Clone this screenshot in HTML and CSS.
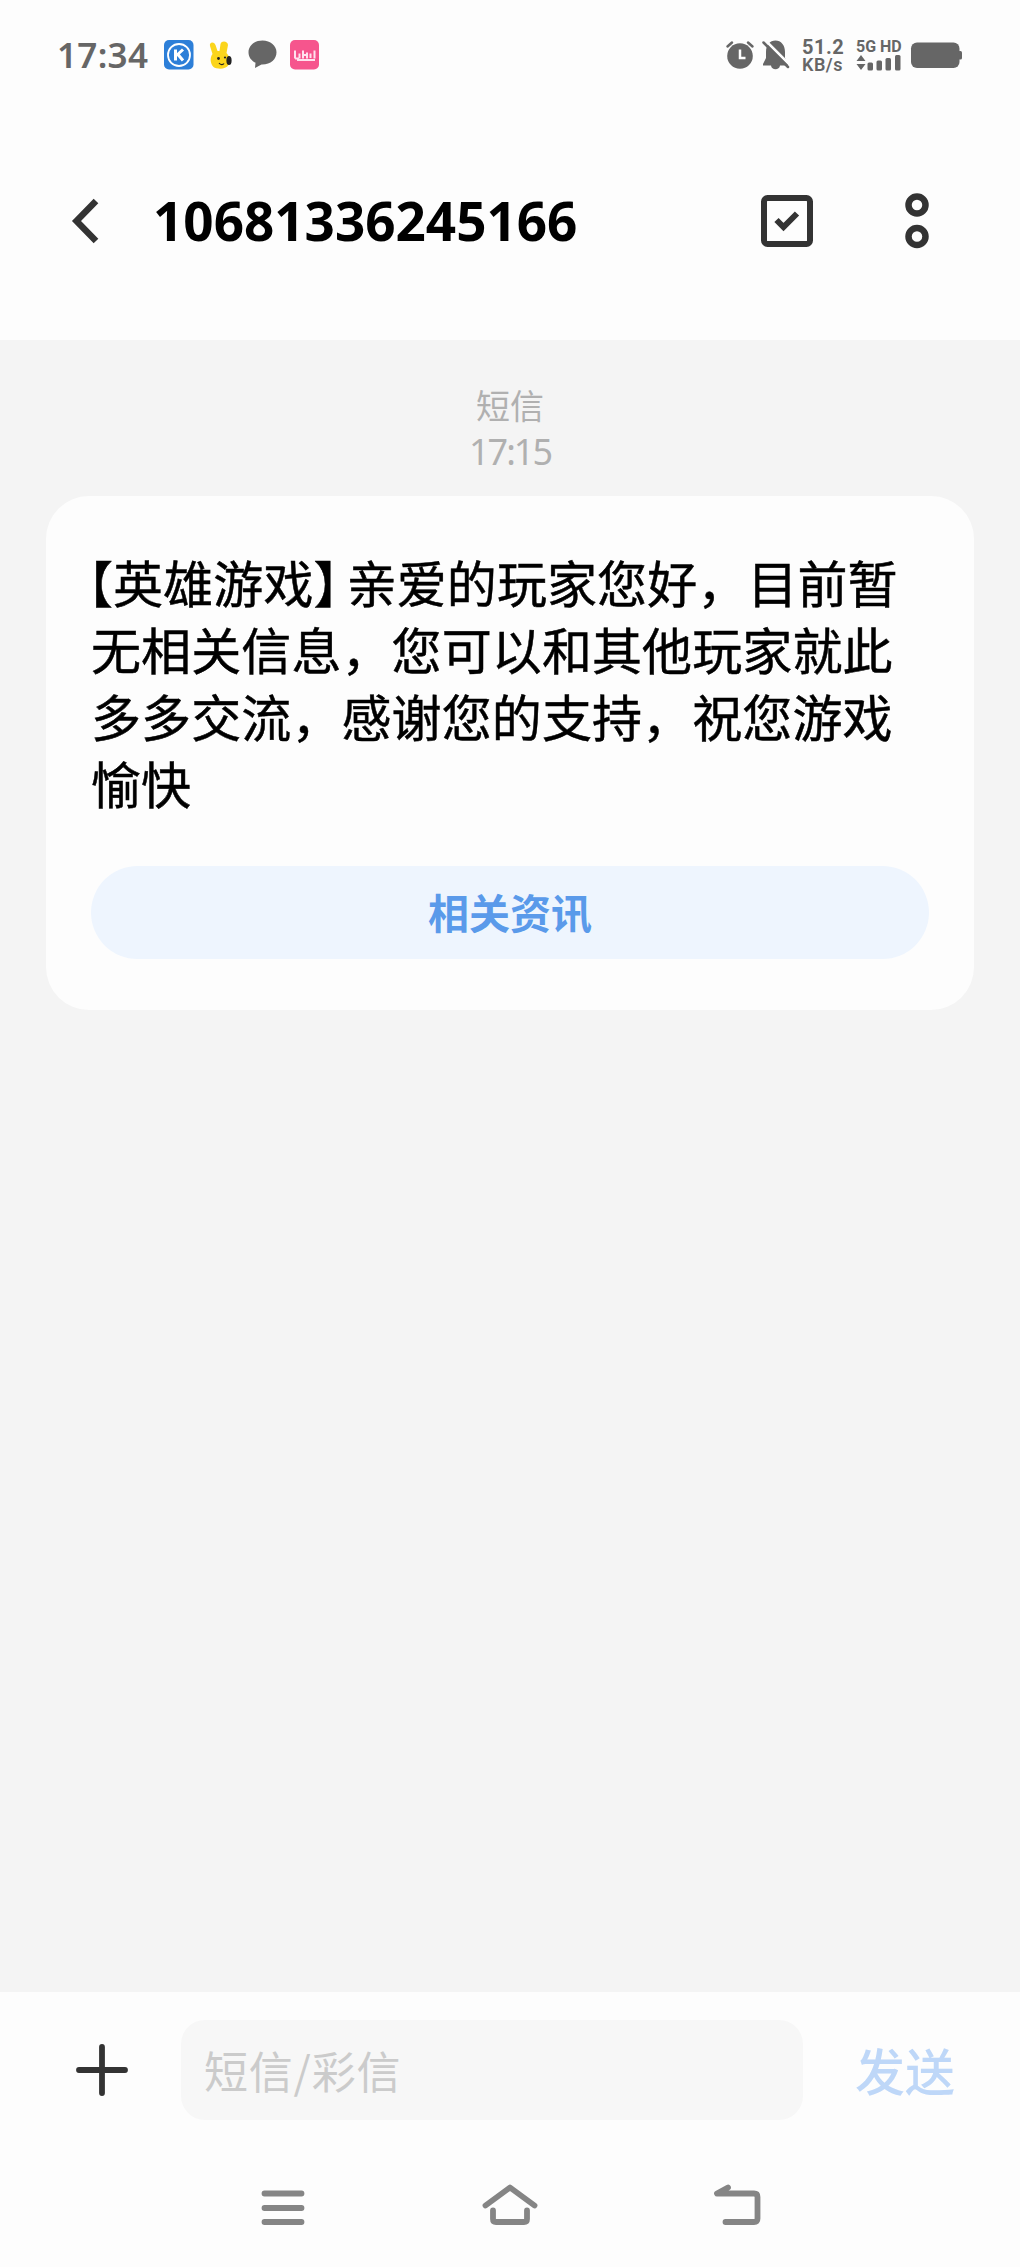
FILE: index.html
```
<!DOCTYPE html>
<html lang="zh-CN">
<head>
    <meta charset="UTF-8">
    <meta name="viewport" content="width=device-width, initial-scale=1.0">
    <title>短信</title>
    <link rel="stylesheet" href="styles.css">
</head>
<body>
    <div class="phone">
        <div class="status-bar">
            <div class="status-left">
                <span class="clock">17:34</span>
                <svg class="app-icon" width="30" height="30" viewBox="0 0 30 30">
                    <rect width="29.5" height="29.5" rx="5" fill="#2d7fd8"/>
                    <circle cx="15" cy="15" r="11" fill="none" stroke="#fff" stroke-width="1.8"/>
                    <path d="M11.5 9.5v11M19 9.5l-6.5 6M14 14.5l5 6" fill="none" stroke="#fff" stroke-width="3"/>
                </svg>
                <svg class="app-icon" width="24" height="30" viewBox="0 0 24 30">
                    <path d="M1 6C0 2 5 1 6.5 5l2 6h2l1-7c1-4 7.5-3 7.500 1l-1.500 8c3 3 4 8 2 12-3 5-12 4-15 2-3-3-4-9-1-13z" fill="#fbd51c"/>
                    <ellipse cx="20" cy="20.5" rx="2.6" ry="4.5" fill="#222"/>
                    <circle cx="9.5" cy="18.5" r="1.4" fill="#222"/>
                    <circle cx="16" cy="17.5" r="1.1" fill="#222"/>
                    <path d="M10 23c1.500 2 4 2 5 .5" fill="none" stroke="#222" stroke-width="1.2"/>
                </svg>
                <svg class="app-icon" width="30" height="30" viewBox="0 0 30 30">
                    <path d="M14.500 .5C6.500 .5 .5 5.700.5 12.200c0 5 3 8.500 7 10.500L7 28l6.500-3.500c9 .3 15-5.300 15-12.300C28.500 5.700 22.500 .5 14.500 .5z" fill="#666"/>
                </svg>
                <svg class="app-icon app-icon-last" width="30" height="30" viewBox="0 0 30 30">
                    <rect width="29" height="29.5" rx="5" fill="#f6558d"/>
                    <path d="M5 10.500v8M5 18.500h4M9.500 13.500v5M13 10.500v8M13 15h3M17 12.500v6M20.500 13.500v4.500M24.500 10.500v8M7 20h18" fill="none" stroke="#ffe3ee" stroke-width="2"/>
                </svg>
            </div>
            <div class="status-right">
                <svg width="28" height="30" viewBox="0 0 28 30">
                    <circle cx="14" cy="16" r="12.8" fill="#666"/>
                    <path d="M1.500 6.500l4.500-4M26.500 6.500l-4.500-4" stroke="#666" stroke-width="2.5" stroke-linecap="round"/>
                    <path d="M14 9.500v8.500h5.500" fill="none" stroke="#fff" stroke-width="2.5"/>
                </svg>
                <svg class="bell" width="28" height="30" viewBox="0 0 28 30">
                    <path d="M4 12C4 5 8 .5 13.500.5S23 5 23 12v6l3 6v1.500h-8c-.5 5-8.500 5-9 0H1V24l3-6z" fill="#666"/>
                    <path d="M3 0l25 25" stroke="#fdfdfd" stroke-width="2.5"/>
                    <path d="M1.500 2.500L26 27" stroke="#666" stroke-width="2.5" stroke-linecap="round"/>
                </svg>
                <div class="speed">
                    <span class="speed-value">51.2</span>
                    <span class="speed-unit">KB/s</span>
                </div>
                <div class="network">
                    <span class="network-type">5G HD</span>
                    <svg width="46" height="17" viewBox="0 0 46 17" fill="#666">
                        <path d="M5 1l4.500 6h-9zM5 16L.5 10h9z"/>
                        <rect x="11.5" y="8.5" width="5.5" height="8" rx="1.5"/>
                        <rect x="20.5" y="6.5" width="5.5" height="10" rx="1.5"/>
                        <rect x="29.5" y="4" width="5.5" height="12.5" rx="1.5"/>
                        <rect x="39" y="1" width="5.5" height="15.5" rx="1.5"/>
                    </svg>
                </div>
                <svg class="battery" width="52" height="27" viewBox="0 0 52 27" fill="#666">
                    <rect y=".5" width="48.5" height="25.5" rx="6"/>
                    <rect x="47" y="9" width="4" height="8.5" rx="1.5"/>
                </svg>
            </div>
        </div>

        <div class="header">
            <svg class="back" width="32" height="50" viewBox="0 0 32 50">
                <path d="M27 5L7.500 25 27 45" fill="none" stroke="#333" stroke-width="6.5"/>
            </svg>
            <h1 class="title">10681336245166</h1>
            <svg class="select" width="52" height="52" viewBox="0 0 52 52" fill="none" stroke="#333" stroke-width="6">
                <rect x="3" y="3" width="46" height="46" rx="3.5"/>
                <path d="M15.500 25l7 7L36 18.500"/>
            </svg>
            <svg class="more" width="24" height="56" viewBox="0 0 24 56" fill="none" stroke="#333" stroke-width="6.5">
                <circle cx="12" cy="12" r="8.5"/>
                <circle cx="12" cy="43.5" r="8.5"/>
            </svg>
        </div>

        <div class="messages">
            <div class="stamp">
                <span class="stamp-type">短信</span>
                <span class="stamp-time">17:15</span>
            </div>
            <div class="card">
                <p class="text"><span class="open">【</span>英雄游戏<span class="close">】</span>亲爱的玩家您好，目前暂<br>无相关信息，您可以和其他玩家就此<br>多多交流，感谢您的支持，祝您游戏<br>愉快</p>
                <button class="info-btn" type="button">相关资讯</button>
            </div>
        </div>

        <div class="compose">
            <svg class="plus" width="52" height="52" viewBox="0 0 52 52">
                <path d="M26 3v46M3 26h46" stroke="#333" stroke-width="5.8" stroke-linecap="round"/>
            </svg>
            <div class="field">短信/彩信</div>
            <span class="send">发送</span>
        </div>

        <div class="nav-bar">
            <svg width="56" height="44" viewBox="0 0 56 44">
                <path d="M9.500 7.500h37M9.500 22h37M9.500 36h37"/>
            </svg>
            <svg width="56" height="44" viewBox="0 0 56 44">
                <path d="M3.500 19.500L28 1.500l24.500 18M11 24.500V33q0 3 3 3h28q3 0 3-3v-8.500"/>
            </svg>
            <svg width="56" height="44" viewBox="0 0 56 44">
                <path d="M19 1.500L8 7.500h37q3.500 0 3.500 3.500v21.500q0 3.500-3.500 3.500H16.500"/>
            </svg>
        </div>
    </div>
</body>
</html>
```
FILE: styles.css
```
* {
    box-sizing: border-box;
}
body {
    margin: 0;
    font-family: "Noto Sans CJK SC", sans-serif;
    background-color: #fdfdfd;
}
svg {
    display: block;
    flex-shrink: 0;
    overflow: visible;
}
.phone {
    width: 1020px;
    height: 2267px;
    display: flex;
    flex-direction: column;
    overflow: hidden;
}

/* status bar */
.status-bar {
    height: 110px;
    padding: 0 57px;
    display: flex;
    justify-content: space-between;
    align-items: center;
    color: #666;
}
.status-left, .status-right {
    display: flex;
    align-items: center;
}
.clock {
    width: 92px;
    font-family: "Noto Sans", sans-serif;
    font-size: 35px;
    font-weight: 600;
    line-height: 40px;
    letter-spacing: 0.3px;
}
.app-icon {
    margin-left: 15px;
}
.app-icon-last {
    margin-left: 12px;
}
.bell {
    margin-left: 8px;
}
.speed {
    width: 44px;
    margin-left: 12px;
    display: flex;
    flex-direction: column;
    font-family: Roboto, sans-serif;
}
.speed-value {
    font-size: 20px;
    font-weight: 700;
    line-height: 18px;
    letter-spacing: 0.5px;
}
.speed-unit {
    font-size: 18px;
    font-weight: 600;
    line-height: 17px;
    letter-spacing: 0.5px;
}
.network {
    width: 46px;
    margin-left: 10px;
}
.network-type {
    display: block;
    font-family: Roboto, sans-serif;
    font-size: 16px;
    font-weight: 700;
    line-height: 15px;
    white-space: nowrap;
}
.battery {
    margin-left: 9px;
}

/* title bar */
.header {
    height: 230px;
    padding: 0 90px 8px 69px;
    display: flex;
    align-items: flex-start;
}
.back {
    margin-top: 86px;
}
.title {
    width: 460px;
    margin: 79px 0 0 52px;
    font-family: "Noto Sans", sans-serif;
    font-size: 53px;
    font-weight: 700;
    line-height: 64px;
    color: #000;
}
.select {
    margin: 85px 0 0 148px;
}
.more {
    margin: 83px 0 0 92px;
}

/* conversation */
.messages {
    flex: 1;
    padding: 43px 46px 0;
    background: #f4f4f4;
}
.stamp {
    height: 113px;
    display: flex;
    flex-direction: column;
    align-items: center;
    color: #b0b0b0;
}
.stamp-type {
    font-size: 34px;
    line-height: 44px;
}
.stamp-time {
    font-family: "Noto Sans", sans-serif;
    font-size: 36px;
    line-height: 50px;
    letter-spacing: -2px;
}
.card {
    height: 514px;
    padding: 52px 45px 0;
    border-radius: 43px;
    background: #fdfdfd;
}
.text {
    height: 318px;
    margin: 0;
    font-size: 50px;
    -webkit-text-stroke: 0.5px #000;
    line-height: 67px;
    letter-spacing: 0.1px;
    white-space: nowrap;
    text-spacing-trim: space-all;
    color: #000;
}
/* half-width brackets */
.open, .close {
    font-feature-settings: "halt";
}
.open {
    margin-left: -3px;
}
.close {
    margin-right: 8px;
}
.info-btn {
    width: 838px;
    height: 93px;
    padding: 0 0 4px;
    border: none;
    border-radius: 47px;
    background: #eef5fe;
    color: #5a9aea;
    font-family: inherit;
    font-size: 41px;
    font-weight: 700;
}

/* message input */
.compose {
    height: 156px;
    padding: 28px 0 0 76px;
    display: flex;
    align-items: flex-start;
}
.plus {
    margin-top: 24px;
}
.field {
    width: 622px;
    height: 100px;
    margin-left: 53px;
    padding-left: 23px;
    border-radius: 24px;
    background: #f7f7f7;
    color: #cbcbcb;
    font-size: 44px;
    letter-spacing: 0.8px;
    line-height: 100px;
}
.send {
    margin-left: 52px;
    color: #bed7f8;
    font-size: 50px;
    font-weight: 500;
    line-height: 99px;
}

/* system navigation */
.nav-bar {
    height: 119px;
    padding: 38px 255px 0;
    display: flex;
    justify-content: space-between;
}
.nav-bar path {
    fill: none;
    stroke: #858585;
    stroke-width: 5.8;
    stroke-linecap: round;
    stroke-linejoin: round;
}
```
